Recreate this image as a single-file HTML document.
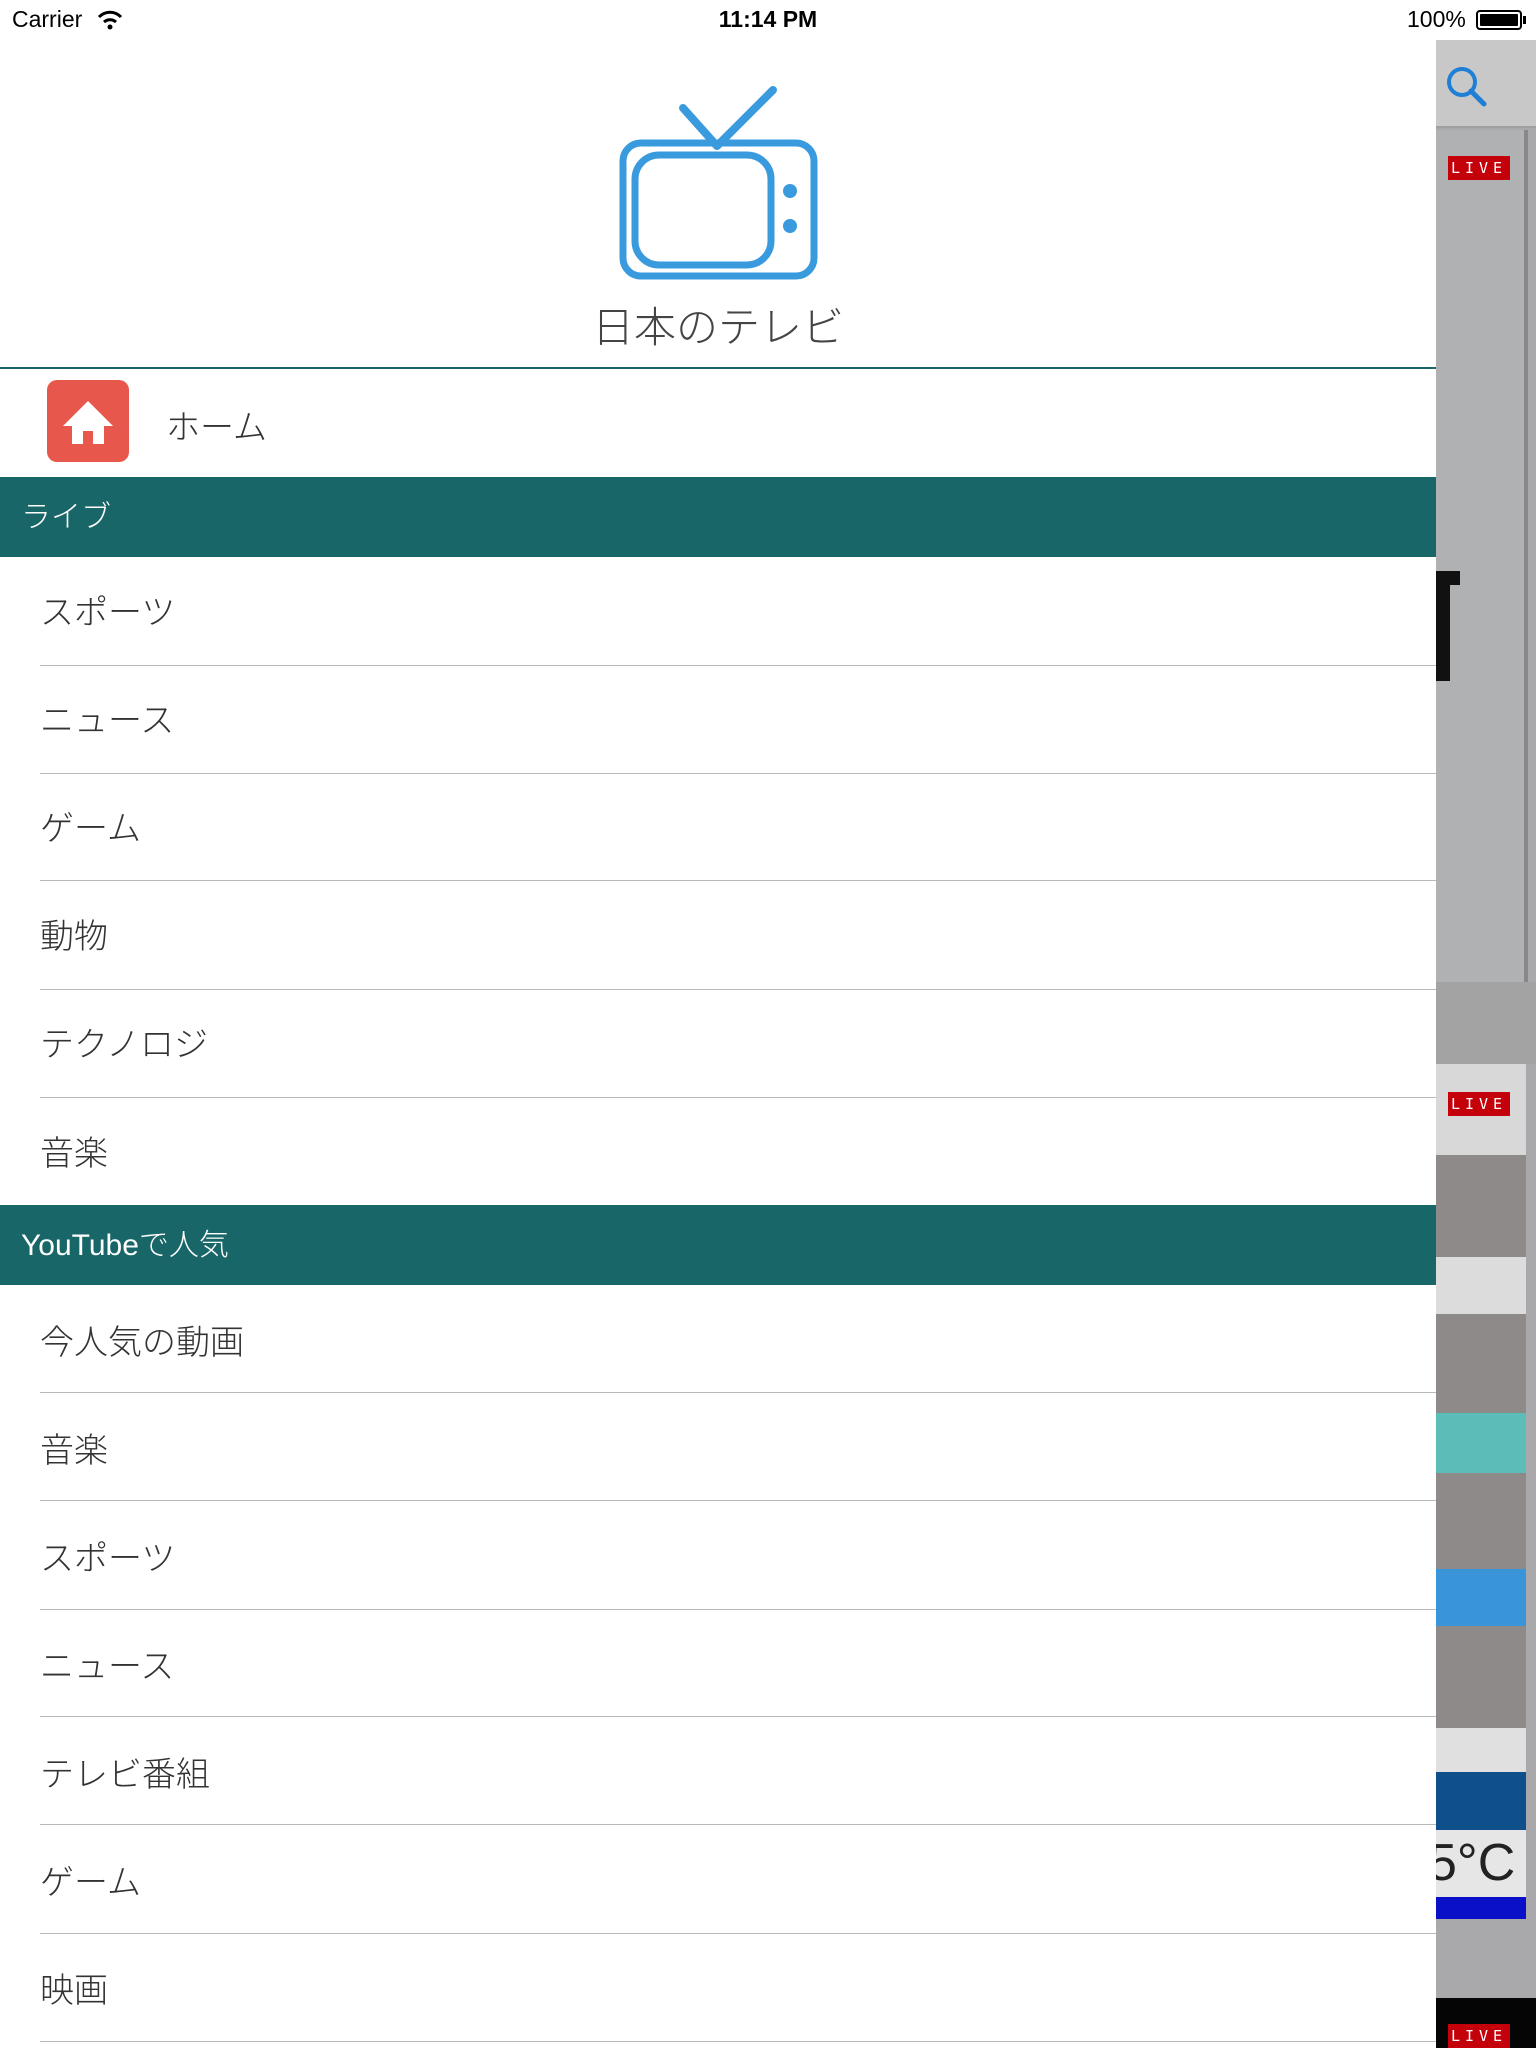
<!DOCTYPE html>
<html><head><meta charset="utf-8"><style>
*{margin:0;padding:0;box-sizing:border-box}
body{width:1536px;height:2048px;position:relative;overflow:hidden;background:#fff;font-family:"Liberation Sans","Noto Sans CJK JP",sans-serif}
.a{position:absolute}
.row{position:absolute;left:0;width:1436px;font-size:34px;color:#333;font-weight:300;font-family:"Liberation Sans","Noto Sans CJK JP",sans-serif}
.row span{position:absolute;left:40px}
.sep{position:absolute;left:40px;width:1396px;height:1px;background:#b8b8b8}
.hdr{position:absolute;left:0;width:1436px;background:#186668;color:#fff;font-size:30px;font-weight:300}
.live{position:absolute;left:1448px;width:62px;height:24px;background:#c4000a;color:#fff;font-size:15px;letter-spacing:5px;text-align:center;line-height:24px;font-family:"DejaVu Sans Mono",monospace}
</style></head><body>
<!-- right strip -->
<div class="a" style="left:1436px;top:40px;width:100px;height:2008px;background:#a9a9ab"></div>
<div class="a" style="left:1436px;top:40px;width:100px;height:88px;background:#c8c8c8;border-bottom:2px solid #a0a0a0"></div>
<svg class="a" style="left:1440px;top:60px" width="60" height="50"><circle cx="22" cy="22" r="13" fill="none" stroke="#1f7ed6" stroke-width="4"/><line x1="31" y1="31" x2="44" y2="44" stroke="#1f7ed6" stroke-width="5" stroke-linecap="round"/></svg>
<div class="a" style="left:1436px;top:130px;width:90px;height:852px;background:#b0b1b3"></div>
<div class="a" style="left:1524px;top:130px;width:4px;height:852px;background:#888"></div>
<div class="live" style="top:156px">LIVE</div>
<div class="a" style="left:1436px;top:571px;width:14px;height:110px;background:#111"></div>
<div class="a" style="left:1436px;top:571px;width:24px;height:14px;background:#111"></div>
<div class="a" style="left:1436px;top:982px;width:100px;height:82px;background:#a3a3a3"></div>
<div class="a" style="left:1436px;top:1064px;width:90px;height:855px;background:#8e8a8a"></div>
<div class="a" style="left:1436px;top:1064px;width:90px;height:91px;background:#d8d8d8"></div>
<div class="a" style="left:1436px;top:1257px;width:90px;height:57px;background:#dcdcdc"></div>
<div class="a" style="left:1436px;top:1413px;width:90px;height:60px;background:#5bbcb8"></div>
<div class="a" style="left:1436px;top:1569px;width:90px;height:57px;background:#3a94d8"></div>
<div class="a" style="left:1436px;top:1728px;width:90px;height:44px;background:#e0e0e0"></div>
<div class="a" style="left:1436px;top:1772px;width:90px;height:58px;background:#10508a"></div>
<div class="a" style="left:1436px;top:1830px;width:90px;height:67px;background:#e6e6e6;font-size:52px;line-height:67px;color:#222;overflow:hidden"><span style="margin-left:-8px">5°C</span></div>
<div class="a" style="left:1436px;top:1897px;width:90px;height:22px;background:#0a10c8"></div>
<div class="live" style="top:1092px">LIVE</div>
<div class="a" style="left:1436px;top:1998px;width:100px;height:50px;background:#050505"></div>
<div class="live" style="top:2024px">LIVE</div>

<!-- status bar -->
<div class="a" style="left:12px;top:6px;font-size:23px;color:#000">Carrier</div>
<svg class="a" style="left:96px;top:8px" width="28" height="22"><path d="M3 9 A15 15 0 0 1 25 9" fill="none" stroke="#000" stroke-width="3"/><path d="M8 14 A9 9 0 0 1 20 14" fill="none" stroke="#000" stroke-width="3"/><circle cx="14" cy="19" r="2.5" fill="#000"/></svg>
<div class="a" style="left:0;width:1536px;top:6px;text-align:center;font-size:23px;font-weight:bold;color:#000">11:14 PM</div>
<div class="a" style="left:1407px;top:6px;font-size:23px;color:#000">100%</div>
<div class="a" style="left:1476px;top:10px;width:46px;height:20px;border:2px solid #000;border-radius:4px;padding:2px"><div style="width:100%;height:100%;background:#000;border-radius:1px"></div></div>
<div class="a" style="left:1523px;top:16px;width:3px;height:8px;background:#000"></div>

<!-- panel -->
<svg class="a" style="left:610px;top:80px" width="220" height="210">
<path d="M73 28 L107 66 L163 10" fill="none" stroke="#3a9ade" stroke-width="8" stroke-linecap="round" stroke-linejoin="round"/>
<rect x="13" y="63" width="191" height="133" rx="18" fill="none" stroke="#3a9ade" stroke-width="7"/>
<rect x="25" y="75" width="136" height="110" rx="24" fill="none" stroke="#3a9ade" stroke-width="7"/>
<circle cx="180" cy="111" r="7" fill="#3a9ade"/><circle cx="180" cy="146" r="7" fill="#3a9ade"/>
</svg>
<div class="a" style="left:0;width:1436px;top:294px;text-align:center;font-size:42px;color:#444;font-weight:300">日本のテレビ</div>
<div class="a" style="left:0;top:367px;width:1436px;height:2px;background:#186668"></div>
<div class="a" style="left:47px;top:380px;width:82px;height:82px;background:#e8574b;border-radius:10px"></div>
<svg class="a" style="left:47px;top:380px" width="82" height="82"><path d="M41 21 L16 46 L25 46 L25 64 L36 64 L36 51 L46 51 L46 64 L57 64 L57 46 L66 46 Z" fill="#fff"/></svg>
<div class="row" style="top:400px"><span style="left:166px">ホーム</span></div>
<div class="hdr" style="top:477px;height:80px"><span class="a" style="left:21px;top:15px">ライブ</span></div>
<div class="row" style="top:585px"><span>スポーツ</span></div>
<div class="sep" style="top:665px"></div>
<div class="row" style="top:693px"><span>ニュース</span></div>
<div class="sep" style="top:773px"></div>
<div class="row" style="top:801px"><span>ゲーム</span></div>
<div class="sep" style="top:880px"></div>
<div class="row" style="top:909px"><span>動物</span></div>
<div class="sep" style="top:989px"></div>
<div class="row" style="top:1017px"><span>テクノロジ</span></div>
<div class="sep" style="top:1097px"></div>
<div class="row" style="top:1126px"><span>音楽</span></div>
<div class="hdr" style="top:1205px;height:80px"><span class="a" style="left:21px;top:15px">YouTubeで人気</span></div>
<div class="row" style="top:1315px"><span>今人気の動画</span></div>
<div class="sep" style="top:1392px"></div>
<div class="row" style="top:1423px"><span>音楽</span></div>
<div class="sep" style="top:1500px"></div>
<div class="row" style="top:1531px"><span>スポーツ</span></div>
<div class="sep" style="top:1609px"></div>
<div class="row" style="top:1639px"><span>ニュース</span></div>
<div class="sep" style="top:1716px"></div>
<div class="row" style="top:1747px"><span>テレビ番組</span></div>
<div class="sep" style="top:1824px"></div>
<div class="row" style="top:1855px"><span>ゲーム</span></div>
<div class="sep" style="top:1933px"></div>
<div class="row" style="top:1963px"><span>映画</span></div>
<div class="sep" style="top:2041px"></div>
</body></html>
